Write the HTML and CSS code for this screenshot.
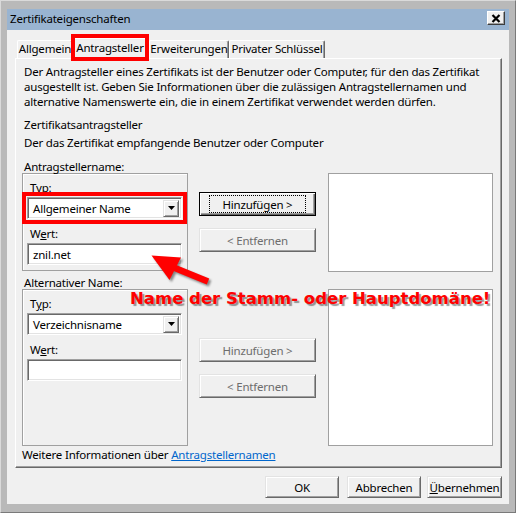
FILE: index.html
```html
<!DOCTYPE html>
<html lang="de">
<head>
<meta charset="utf-8">
<title>Zertifikateigenschaften</title>
<link rel="stylesheet" href="styles.css">
</head>
<body>
<div class="window">
  <div class="titlebar">
    <span class="title">Zertifikateigenschaften</span>
    <button class="close" type="button" aria-label="Schließen">
      <svg width="10" height="9" viewBox="0 0 10 9"><path d="M1.5 1 L8.5 8 M8.5 1 L1.5 8" stroke="#000" stroke-width="2.2" fill="none"/></svg>
    </button>
  </div>
  <div class="client">
    <div class="tabs">
      <div class="tab t1">Allgemein</div>
      <div class="tab t2 selected">Antragsteller</div>
      <div class="tab t3">Erweiterungen</div>
      <div class="tab t4">Privater Schlüssel</div>
    </div>
    <div class="panel">
      <p class="intro">Der Antragsteller eines Zertifikats ist der Benutzer oder Computer, für den das Zertifikat<br>ausgestellt ist. Geben Sie Informationen über die zulässigen Antragstellernamen und<br>alternative Namenswerte ein, die in einem Zertifikat verwendet werden dürfen.</p>
      <p class="heading">Zertifikatsantragsteller</p>
      <p class="sub">Der das Zertifikat empfangende Benutzer oder Computer</p>

      <div class="section s1">
        <div class="left">
          <div class="glabel">Antragstellername:</div>
          <div class="gbox">
            <div class="flabel">T<u>y</u>p:</div>
            <div class="combo"><span class="val">Allgemeiner Name</span><span class="drop"><svg width="7" height="4" viewBox="0 0 7 4"><path d="M0 0 H7 L3.5 4 Z" fill="#000"/></svg></span></div>
            <div class="flabel wert">W<u>e</u>rt:</div>
            <div class="input">znil.net</div>
          </div>
        </div>
        <div class="mid">
          <button class="btn default" type="button"><span class="focus">Hinzufügen &gt;</span></button>
          <button class="btn disabled" type="button">&lt; Entfernen</button>
        </div>
        <div class="list"></div>
      </div>

      <div class="section s2">
        <div class="left">
          <div class="glabel">Alternativer Name:</div>
          <div class="gbox">
            <div class="flabel">T<u>y</u>p:</div>
            <div class="combo"><span class="val">Verzeichnisname</span><span class="drop"><svg width="7" height="4" viewBox="0 0 7 4"><path d="M0 0 H7 L3.5 4 Z" fill="#000"/></svg></span></div>
            <div class="flabel wert">W<u>e</u>rt:</div>
            <div class="input"></div>
          </div>
        </div>
        <div class="mid">
          <button class="btn disabled" type="button">Hinzufügen &gt;</button>
          <button class="btn disabled" type="button">&lt; Entfernen</button>
        </div>
        <div class="list"></div>
      </div>

      <div class="more">Weitere Informationen über <a href="#" class="link">Antragstellernamen</a></div>
    </div>
    <div class="footer">
      <button class="btn fbtn ok" type="button">OK</button>
      <button class="btn fbtn cancel" type="button">Abbrechen</button>
      <button class="btn fbtn apply" type="button"><u>Ü</u>bernehmen</button>
    </div>
  </div>

  <div class="mark mark-tab"></div>
  <div class="mark mark-combo"></div>
  <svg class="arrow" width="80" height="50" viewBox="0 0 80 50">
    <line x1="30" y1="21" x2="68" y2="36.5" stroke="#ff0000" stroke-width="6.5"/>
    <polygon points="11.5,10.5 41,12.5 29.5,35" fill="#ff0000"/>
  </svg>
  <div class="note">Name der Stamm- oder Hauptdomäne!</div>
</div>
</body>
</html>
```

FILE: styles.css
```css
* { box-sizing: border-box; }

html, body {
  margin: 0;
  padding: 0;
}

body {
  width: 516px;
  height: 513px;
  overflow: hidden;
  background: #b9b9b9;
  font-family: "Noto Sans", "Open Sans", sans-serif;
  font-size: 11.5px;
  letter-spacing: -0.2px;
  color: #000;
}

.window {
  position: relative;
  width: 516px;
  height: 513px;
  background: #b9b9b9;
  border: 1px solid;
  border-color: #dadada #7a7a7a #7a7a7a #dadada;
  padding: 8px 6px 8px 6px;
  display: flex;
  flex-direction: column;
}

/* title bar */
.titlebar {
  height: 21px;
  flex: none;
  background: #99b4d1;
  display: flex;
  align-items: flex-start;
  padding: 0 4px 0 3px;
}

.title {
  flex: 1;
  line-height: 20px;
  white-space: nowrap;
}

.close {
  margin-top: 2px;
  width: 18px;
  height: 14px;
  padding: 0;
  background: #f0f0f0;
  border: 1px solid;
  border-color: #ffffff #3c3c3c #3c3c3c #ffffff;
  box-shadow: inset -1px -1px #a0a0a0;
  display: flex;
  align-items: center;
  justify-content: center;
}

.close svg { display: block; }

/* client */
.client {
  flex: 1;
  background: #f0f0f0;
  padding: 8px 7px 0 8px;
  display: flex;
  flex-direction: column;
}

.tabs {
  display: flex;
  height: 20px;
  margin-left: 2px;
  position: relative;
  z-index: 1;
}

.tab {
  margin-top: 2px;
  height: 18px;
  line-height: 16px;
  text-align: center;
  white-space: nowrap;
  background: #f0f0f0;
  border-top: 1px solid #ffffff;
  border-left: 1px solid #ffffff;
  border-right: 1px solid #696969;
  box-shadow: inset -1px 0 #a0a0a0;
  border-radius: 2px 2px 0 0;
}

.t1 { width: 56px; }
.t2 { width: 78px; margin-left: -2px; }
.t3 { width: 80px; }
.t4 { width: 96px; }

.tab.selected {
  margin-top: 0;
  height: 21px;
  line-height: 18px;
  position: relative;
  z-index: 2;
}

.panel {
  height: 410px;
  flex: none;
  background: #f0f0f0;
  border: 1px solid;
  border-color: #ffffff #696969 #696969 #ffffff;
  box-shadow: inset -1px -1px #a0a0a0;
  padding: 5px 0 0 6px;
}

.panel p {
  margin: 0;
  padding-left: 2px;
  line-height: 15px;
  white-space: nowrap;
}

.heading { margin-top: 8px !important; }
.sub { margin-top: 3px !important; }

/* sections */
.section {
  display: flex;
  align-items: flex-start;
}

.s1 { margin-top: 10px; }
.s2 { margin-top: 4px; }

.left { width: 166px; }

.glabel {
  height: 13px;
  line-height: 13px;
  padding-left: 2px;
  white-space: nowrap;
}

.gbox {
  border: 1px solid #a0a0a0;
  box-shadow: inset 1px 1px #ffffff;
  padding: 6px 4px 0 4px;
}

.s1 .gbox { height: 98px; }
.s2 .gbox { height: 157px; }

.flabel {
  line-height: 15px;
  padding-left: 3px;
}

.flabel.wert { margin-top: 7px; }

.combo,
.input {
  margin-top: 2px;
  width: 155px;
  height: 22px;
  background: #ffffff;
  border: 1px solid;
  border-color: #a0a0a0 #ffffff #ffffff #a0a0a0;
  box-shadow: inset 1px 1px #696969, inset -1px -1px #e3e3e3;
  display: flex;
  align-items: center;
  padding: 2px 2px 2px 5px;
  white-space: nowrap;
}

.combo .val { flex: 1; }

.drop {
  width: 16px;
  height: 17px;
  background: #f0f0f0;
  border: 1px solid;
  border-color: #e3e3e3 #696969 #696969 #e3e3e3;
  box-shadow: inset 1px 1px #ffffff, inset -1px -1px #a0a0a0;
  display: flex;
  align-items: center;
  justify-content: center;
}

.drop svg { display: block; }

.mid {
  width: 117px;
  margin-left: 11px;
  display: flex;
  flex-direction: column;
  gap: 12px;
}

.s1 .mid { padding-top: 32px; }
.s2 .mid { padding-top: 62px; }

.btn {
  font: inherit;
  letter-spacing: inherit;
  color: #000;
  height: 24px;
  padding: 0;
  background: #f0f0f0;
  border: 1px solid;
  border-color: #e3e3e3 #696969 #696969 #e3e3e3;
  box-shadow: inset 1px 1px #ffffff, inset -1px -1px #a0a0a0;
  display: flex;
  align-items: center;
  justify-content: center;
  white-space: nowrap;
}

.btn.default {
  border-color: #000;
  box-shadow: inset 1px 1px #ffffff, inset -1px -1px #696969, inset -2px -2px #a0a0a0;
}

.focus {
  display: flex;
  align-items: center;
  justify-content: center;
  width: 97px;
  height: 18px;
  border: 1px dotted #000;
}

.btn.disabled { color: #6d6d6d; }

.list {
  width: 165px;
  margin-left: 12px;
  margin-top: 13px;
  background: #ffffff;
  border: 1px solid #a0a0a0;
}

.s1 .list { height: 99px; }
.s2 .list { height: 157px; }

.more {
  margin-top: 1px;
  line-height: 15px;
  white-space: nowrap;
}

.link {
  color: #0066cc;
  text-decoration: underline;
}

/* footer */
.footer {
  display: flex;
  justify-content: flex-end;
  margin-top: 8px;
}

.fbtn { height: 22px; }
.ok { width: 74px; }
.cancel { width: 74px; margin-left: 8px; }
.apply { width: 75px; margin-left: 6px; }

/* annotations */
.mark {
  position: absolute;
  border: 4px solid #ff0000;
  z-index: 5;
}

.mark-tab {
  left: 70px;
  top: 33px;
  width: 78px;
  height: 27px;
}

.mark-combo {
  left: 21px;
  top: 191px;
  width: 165px;
  height: 32px;
}

.arrow {
  position: absolute;
  left: 139px;
  top: 244px;
  z-index: 5;
  filter: drop-shadow(2px 2px 1px rgba(0, 0, 0, 0.45));
}

.note {
  position: absolute;
  left: 129px;
  top: 288px;
  z-index: 5;
  font-family: "DejaVu Sans", Verdana, sans-serif;
  font-weight: bold;
  font-size: 16.5px;
  letter-spacing: 0;
  line-height: 20px;
  color: #ff0000;
  white-space: nowrap;
  text-shadow: 2px 2px 1px rgba(0, 0, 0, 0.4);
}
```
